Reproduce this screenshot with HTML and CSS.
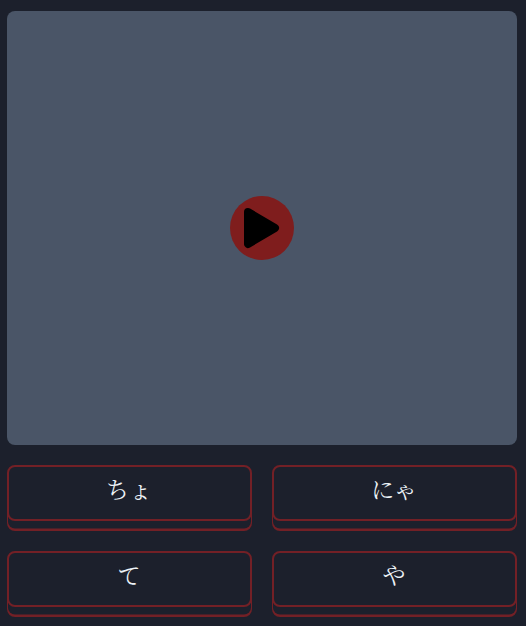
FILE: index.html
```html
<!DOCTYPE html>
<html lang="ja">
<head>
<meta charset="utf-8">
<title>かな</title>
<link rel="stylesheet" href="styles.css">
</head>
<body>
<main class="quiz">
  <section class="player">
    <button class="play" aria-label="再生">
      <svg class="play-icon" viewBox="0 0 64 64"><path d="M18 16L45 32L18 48Z"/></svg>
    </button>
  </section>
  <section class="answers">
    <button class="answer">ちょ</button>
    <button class="answer">にゃ</button>
    <button class="answer">て</button>
    <button class="answer">や</button>
  </section>
</main>
</body>
</html>
```
FILE: styles.css
```css
* {
  box-sizing: border-box;
}

body {
  margin: 0;
  background: #1c202c;
}

.quiz {
  height: 626px;
  padding: 11px 9px 0 7px;
  overflow: hidden;
}

.player {
  display: flex;
  align-items: center;
  justify-content: center;
  height: 434px;
  border-radius: 8px;
  background: #4a5567;
}

.play {
  width: 64px;
  height: 64px;
  padding: 0;
  border: 0;
  border-radius: 50%;
  background: #7f1d1d;
}

.play-icon {
  display: block;
  width: 64px;
  height: 64px;
  fill: #000;
  stroke: #000;
  stroke-width: 8;
  stroke-linejoin: round;
}

.answers {
  display: grid;
  grid-template-columns: 1fr 1fr;
  gap: 30px 20px;
  margin-top: 20px;
}

.answer {
  height: 56px;
  padding: 0 1px 8px 0;
  border: 2px solid #732026;
  border-radius: 8px;
  background: #1c202c;
  box-shadow: 0 8.5px 0 -1px #1c202c, 0 10px 0 0 #732026;
  color: #edf2f7;
  font: 400 23px/32px "Noto Serif CJK JP", "Noto Sans CJK JP", serif;
}
```
